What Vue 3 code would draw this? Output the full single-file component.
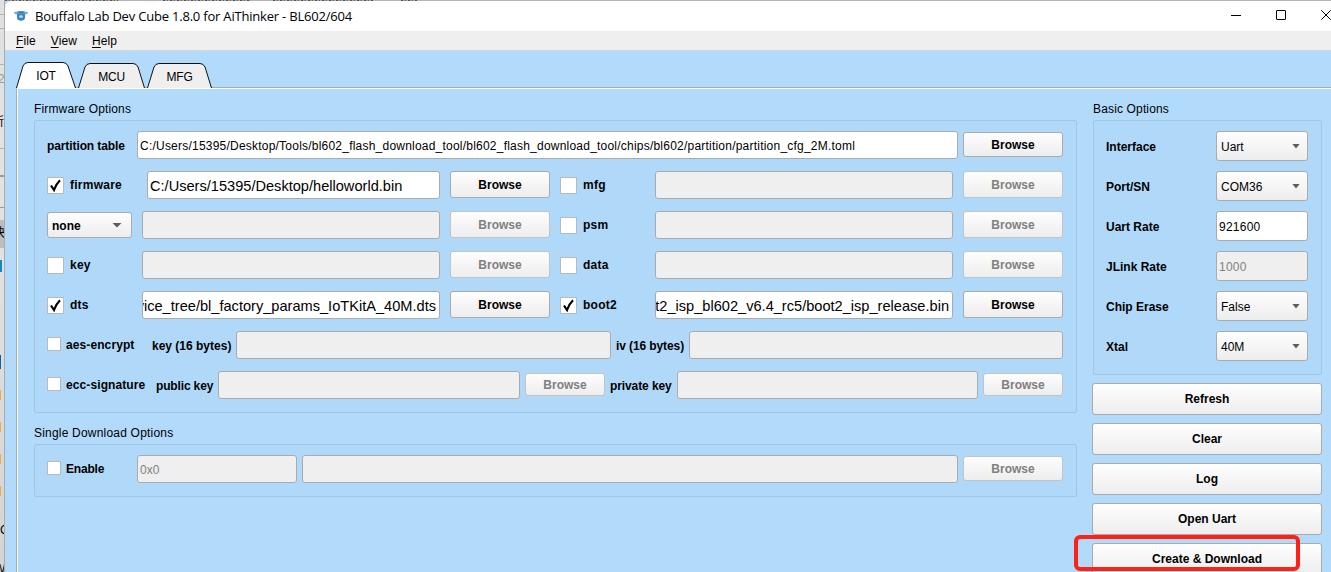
<script setup>
import { ref } from 'vue'

const menus = ['File', 'View', 'Help']
const tabs = ['IOT', 'MCU', 'MFG']
const activeTab = ref('IOT')

const partitionTable = 'C:/Users/15395/Desktop/Tools/bl602_flash_download_tool/bl602_flash_download_tool/chips/bl602/partition/partition_cfg_2M.toml'

const imageRows = [
  [
    { label: 'firmware', checked: true, value: 'C:/Users/15395/Desktop/helloworld.bin', inset: true },
    { label: 'mfg' },
  ],
  [
    { label: 'none', select: true },
    { label: 'psm' },
  ],
  [
    { label: 'key' },
    { label: 'data' },
  ],
  [
    { label: 'dts', checked: true, value: 'vice_tree/bl_factory_params_IoTKitA_40M.dts', tail: true },
    { label: 'boot2', checked: true, value: 't2_isp_bl602_v6.4_rc5/boot2_isp_release.bin', tail: true },
  ],
]

const basicOptions = [
  { label: 'Interface', value: 'Uart', type: 'select' },
  { label: 'Port/SN', value: 'COM36', type: 'select' },
  { label: 'Uart Rate', value: '921600', type: 'field' },
  { label: 'JLink Rate', value: '1000', type: 'disabled' },
  { label: 'Chip Erase', value: 'False', type: 'select' },
  { label: 'Xtal', value: '40M', type: 'select' },
]

const actions = ['Refresh', 'Clear', 'Log', 'Open Uart', 'Create & Download']
</script>

<template>
  <div class="desktop">
    <div class="behind" aria-hidden="true">
      <i class="line line--a"></i>
      <i class="line line--b"></i>
      <i class="line line--c"></i>
      <i class="line line--d"></i>
      <i class="line line--e"></i>
      <i class="line line--f"></i>
      <i class="band"></i>
      <i class="mark mark--teal"></i>
      <i class="mark mark--blue"></i>
      <i class="mark folder folder--1"></i>
      <i class="mark folder folder--2"></i>
      <i class="mark folder folder--3"></i>
      <i class="mark folder folder--4"></i>
      <span class="bit bit--02">2</span>
      <span class="bit bit--suo">所</span>
      <span class="bit bit--kuai">快</span>
      <span class="bit bit--c">C</span>
      <span class="bit bit--w">W</span>
    </div>
    <div class="behind-top" aria-hidden="true"></div>

    <div class="window">
      <header class="titlebar">
        <svg class="logo" width="16" height="12" viewBox="0 0 16 12">
          <path d="M.5 2.500 5 1.200h6l4.500 1.300-2 1.800h-11z" fill="#6aa9d8" />
          <path d="M4 3.500h8V8q-.5 2.800-4 2.800T4 8z" fill="#3b86bd" />
          <path d="M4.500 1.600h7L10 2.900H6z" fill="#2f78ae" />
          <ellipse cx="8" cy="6.600" rx="2" ry="1.300" fill="#b5d9ef" />
        </svg>
        <span class="title">Bouffalo Lab Dev Cube 1.8.0 for AiThinker - BL602/604</span>
        <div class="controls">
          <svg width="10" height="10" viewBox="0 0 10 10"><path d="M0 5.500h10" stroke="#000" /></svg>
          <svg width="10" height="10" viewBox="0 0 10 10"><rect x=".5" y=".5" width="9" height="9" rx=".5" fill="none" stroke="#000" /></svg>
          <svg width="10" height="10" viewBox="0 0 10 10"><path d="M.3.3l9.400 9.400M9.700.3.3 9.700" stroke="#000" /></svg>
        </div>
      </header>

      <nav class="menubar">
        <span v-for="menu in menus" :key="menu"><u>{{ menu[0] }}</u>{{ menu.slice(1) }}</span>
      </nav>

      <div class="tabs">
        <div
          v-for="tab in tabs"
          :key="tab"
          class="tab"
          :class="{ 'tab--active': tab === activeTab }"
          @click="activeTab = tab"
        >
          <svg v-if="tab === activeTab" width="60" height="26" viewBox="0 0 60 26">
            <path d="M.5 26 7 4Q8.500.5 12 .5h35Q50.500.5 52 4l7.500 22" fill="#fff" stroke="#111" />
          </svg>
          <svg v-else-if="tab === 'MFG'" width="65" height="25" viewBox="0 0 65 25">
            <path d="M.5 25 7 4Q8.500.5 12 .5h41Q56.500.5 58 4l6.500 21" fill="#efefef" stroke="#111" />
          </svg>
          <svg v-else width="67" height="25" viewBox="0 0 67 25">
            <path d="M.5 25 7 4Q8.500.5 12 .5h43Q58.500.5 60 4l6.500 21" fill="#efefef" stroke="#111" />
          </svg>
          <span>{{ tab }}</span>
        </div>
      </div>

      <main class="pane">
        <section class="left">
          <h2 class="heading">Firmware Options</h2>
          <div class="group group--firmware">
            <div class="row">
              <label class="label label--partition">partition table</label>
              <div class="field grow field--path"><span>{{ partitionTable }}</span></div>
              <button class="button browse browse--short">Browse</button>
            </div>

            <div v-for="(row, index) in imageRows" :key="index" class="row row--images">
              <div v-for="item in row" :key="item.label" class="image">
                <div v-if="item.select" class="select select--none">
                  <span>{{ item.label }}</span>
                  <i class="arrow arrow--large"></i>
                </div>
                <label v-else class="check">
                  <span class="box">
                    <svg v-if="item.checked" width="11" height="13" viewBox="0 0 11 13">
                      <path d="M1 6.500 4 11Q6 5 10 1.200" fill="none" stroke="#000" stroke-width="2.200" />
                    </svg>
                  </span>
                  {{ item.label }}
                </label>
                <div
                  class="field field--large grow"
                  :class="{ 'field--disabled': !item.value, 'field--inset': item.inset, 'field--tail': item.tail }"
                >
                  <span>{{ item.value }}</span>
                </div>
                <button class="button browse" :disabled="!item.value">Browse</button>
              </div>
            </div>

            <div class="row">
              <label class="check check--small check--aes"><span class="box"></span>aes-encrypt</label>
              <label class="label label--aes">key (16 bytes)</label>
              <div class="field field--disabled field--aes"></div>
              <label class="label label--iv">iv (16 bytes)</label>
              <div class="field field--disabled grow"></div>
            </div>

            <div class="row">
              <label class="check check--small check--ecc"><span class="box"></span>ecc-signature</label>
              <label class="label label--public">public key</label>
              <div class="field field--disabled field--public"></div>
              <button class="button browse browse--narrow" disabled>Browse</button>
              <label class="label label--private">private key</label>
              <div class="field field--disabled grow"></div>
              <button class="button browse browse--narrow" disabled>Browse</button>
            </div>
          </div>

          <h2 class="heading heading--single">Single Download Options</h2>
          <div class="group group--single">
            <div class="row">
              <label class="check check--small check--enable"><span class="box"></span>Enable</label>
              <div class="field field--disabled field--address"><span>0x0</span></div>
              <div class="field field--disabled grow"></div>
              <button class="button browse browse--short" disabled>Browse</button>
            </div>
          </div>
        </section>

        <aside class="right">
          <h2 class="heading">Basic Options</h2>
          <div class="group group--basic">
            <div v-for="option in basicOptions" :key="option.label" class="option">
              <label class="label">{{ option.label }}</label>
              <div v-if="option.type === 'select'" class="select">
                <span>{{ option.value }}</span>
                <i class="arrow"></i>
              </div>
              <div v-else class="field" :class="{ 'field--disabled': option.type === 'disabled' }">
                <span>{{ option.value }}</span>
              </div>
            </div>
          </div>
          <div class="actions">
            <button v-for="action in actions" :key="action" class="button">{{ action }}</button>
            <div class="highlight"></div>
          </div>
        </aside>
      </main>
    </div>
  </div>
</template>

<style>
body {
  overflow: hidden;
}
</style>

<style scoped>
* {
  box-sizing: border-box;
}

.desktop {
  position: relative;
  width: 1331px;
  height: 572px;
  padding: 1px 0 0 5px;
  overflow: hidden;
  background: linear-gradient(#b5b5b5 0 1px, #d8d8d8 1px);
  color: #000;
  font-family: "Liberation Sans", Arial, "Noto Sans CJK SC", sans-serif;
  font-size: 12px;
}

/* sliver of the windows lying behind the tool */
.behind {
  position: absolute;
  inset: 0 auto 0 0;
  width: 5px;
  overflow: hidden;
  background: linear-gradient(#e0e0e0, #e3e3e3 200px, #d4d4d4);
  border-right: 1px solid #a9aaac;
}

.behind > * {
  position: absolute;
  left: 0;
}

.behind-top {
  position: absolute;
  top: 0;
  left: 5px;
  width: 412px;
  height: 1px;
  background:
    repeating-linear-gradient(90deg, #555 0 2px, #999 2px 4px, #666 4px 5px, #aaa 5px 7px) 0 0 / 113px 1px no-repeat,
    repeating-linear-gradient(90deg, #555 0 2px, #999 2px 4px, #666 4px 5px, #aaa 5px 7px) 158px 0 / 87px 1px no-repeat,
    repeating-linear-gradient(90deg, #555 0 2px, #999 2px 4px, #666 4px 5px, #aaa 5px 7px) 268px 0 / 100px 1px no-repeat,
    repeating-linear-gradient(90deg, #555 0 2px, #999 2px 4px, #666 4px 5px, #aaa 5px 7px) 396px 0 / 16px 1px no-repeat;
}

.line {
  width: 5px;
  height: 1px;
  background: #b4b4b4;
}

.line--a { top: 14px; }
.line--b { top: 28px; }
.line--c { top: 64px; }
.line--d { top: 148px; }
.line--e { top: 175px; height: 2px; background: #999; }
.line--f { top: 207px; background: #999; }

.band {
  top: 220px;
  width: 5px;
  height: 28px;
  background: #bdbdbd;
}

.mark {
  top: 260px;
  width: 2px;
  height: 12px;
  background: #1688b9;
}

.mark--blue { top: 355px; width: 1px; height: 14px; background: #0862ac; }
.folder { width: 1px; height: 10px; background: #dfb446; }
.folder--1 { top: 390px; }
.folder--2 { top: 422px; }
.folder--3 { top: 454px; }
.folder--4 { top: 486px; }

.bit { line-height: 14px; }
.behind .bit--02 { top: 72px; left: -2px; color: #999; }
.behind .bit--suo { top: 115px; left: -8px; }
.behind .bit--kuai { top: 226px; left: -7px; }
.behind .bit--c { top: 523px; left: 0; }
.behind .bit--w { top: 562px; left: -6px; }

.window {
  width: 1326px;
  height: 571px;
  border-radius: 7px 0 0;
  overflow: hidden;
  background: #b2dbfb;
}

.titlebar {
  display: flex;
  align-items: center;
  height: 30px;
  padding-left: 8px;
  background: #fff;
}

.logo {
  flex: none;
}

.title {
  margin-left: 6px;
  font-family: "Open Sans", sans-serif;
  font-size: 13px;
  line-height: 20px;
  letter-spacing: -0.2px;
  white-space: nowrap;
}

.controls {
  display: flex;
  gap: 35px;
  width: 100px;
  margin: -2px 0 0 auto;
}

.controls svg {
  flex: none;
}

.menubar {
  display: flex;
  gap: 15px;
  height: 20px;
  padding-left: 11px;
  border-bottom: 1px solid #d3d5d8;
  background: #efefef;
  line-height: 20px;
  letter-spacing: 0.1px;
}

.menubar u {
  text-underline-offset: 2px;
}

.tabs {
  display: flex;
  align-items: flex-end;
  gap: 2px;
  height: 37px;
  padding-left: 11px;
  background: linear-gradient(#a6abb0, #a6abb0) 11px 36px / 100% 1px no-repeat;
}

.tab {
  display: grid;
  justify-items: center;
  align-items: end;
}

.tab > * {
  grid-area: 1 / 1;
}

.tab svg {
  display: block;
}

.tab span {
  padding-bottom: 3px;
  line-height: 15px;
  letter-spacing: -0.2px;
}

.tab--active span {
  padding-bottom: 4px;
}

.pane {
  display: flex;
  gap: 15px;
  height: 484px;
  margin-left: 11px;
  padding: 14px 9px 0 17px;
  border-top: 1px solid #fff;
  border-left: 1px solid #a6abb0;
  box-shadow: inset 1px 0 #fff;
}

.left {
  width: 1043px;
  flex: none;
}

.right {
  width: 230px;
  flex: none;
}

.heading {
  height: 17px;
  margin: 0;
  font-size: 12px;
  font-weight: 400;
  line-height: 12px;
  letter-spacing: 0.15px;
}

.right .heading {
  padding-left: 1px;
}

.heading--single {
  margin-top: 14px;
  letter-spacing: 0.2px;
}

.group {
  border: 1px solid #a3c5e0;
  border-radius: 2px;
  background: #b0d9f9;
  padding: 10px 13px 0 12px;
}

.group--firmware {
  height: 293px;
}

.group--single {
  height: 53px;
}

.row {
  display: flex;
  align-items: center;
  height: 28px;
  margin-bottom: 12px;
}

.row--images {
  gap: 10px;
}

.image {
  display: flex;
  align-items: center;
  width: 503px;
  flex: none;
}

.grow {
  flex: 1;
  min-width: 0;
}

.label,
.check {
  flex: none;
  font-weight: 700;
  line-height: 14px;
  white-space: nowrap;
}

.label {
  padding-top: 1px;
}

.label--partition { width: 90px; letter-spacing: -0.1px; }
.label--aes { width: 84px; }
.label--iv { width: 78px; padding-left: 5px; letter-spacing: -0.1px; }
.label--public { width: 62px; letter-spacing: -0.15px; }
.label--private { width: 72px; padding-left: 5px; letter-spacing: -0.1px; }

.check {
  display: flex;
  align-items: center;
  gap: 6px;
  width: 95px;
  letter-spacing: 0.25px;
}

.check--small {
  gap: 5px;
  letter-spacing: 0.1px;
}

.check--aes { width: 105px; }
.check--ecc { width: 109px; }
.check--enable { width: 90px; letter-spacing: -0.2px; }

.box {
  display: grid;
  place-items: center;
  width: 17px;
  height: 17px;
  border: 1px solid #b9babb;
  background: #fff;
}

.check--small .box {
  width: 14px;
  height: 14px;
  margin-top: -2px;
}

.field {
  display: flex;
  align-items: center;
  height: 28px;
  padding: 1px 2px 0;
  border: 1px solid #ababab;
  border-radius: 3px;
  background: #fff;
  overflow: hidden;
  white-space: nowrap;
}

.field--path {
  margin-right: 5px;
  letter-spacing: 0.22px;
}

.field--disabled {
  background: #efefef;
  color: #808080;
}

.field--large {
  margin-right: 10px;
  font-size: 14.6px;
}

.field--inset {
  margin-left: 5px;
}

.field--tail {
  justify-content: flex-end;
  padding-right: 3px;
}

.field--aes { width: 375px; }
.field--public { width: 302px; margin-right: 5px; }
.field--address { width: 160px; margin-right: 5px; }
.group--single .field.grow { margin-right: 5px; }

.button {
  display: block;
  padding: 0;
  border: 1px solid #ababab;
  border-radius: 3px;
  background: linear-gradient(#fefefe, #ededed);
  color: #000;
  font: 700 12px/14px "Liberation Sans", Arial, sans-serif;
}

.button:disabled {
  border-color: #c1c4c6;
  color: #808080;
}

.browse {
  flex: none;
  width: 100px;
  height: 27px;
  margin-top: -1px;
}

.browse--short {
  height: 25px;
}

.browse--narrow {
  width: 80px;
  height: 23px;
}

.field.grow + .browse--narrow {
  margin-left: 5px;
}

.select {
  display: flex;
  align-items: center;
  justify-content: space-between;
  height: 30px;
  padding: 1px 7px 0 4px;
  border: 1px solid #ababab;
  border-radius: 3px;
  background: linear-gradient(#fefefe, #ededed);
}

.select--none {
  width: 85px;
  height: 26px;
  margin-right: 10px;
  padding-right: 9px;
  font-weight: 700;
}

.arrow {
  flex: none;
  width: 8px;
  height: 5px;
  margin-top: -1px;
  background: #5c5c5c;
  clip-path: polygon(0 0, 100% 0, 50% 100%);
}

.arrow--large {
  width: 10px;
}

.group--basic {
  width: 229px;
  height: 255px;
  margin-left: 1px;
}

.option {
  display: flex;
  align-items: center;
  justify-content: space-between;
  height: 30px;
  margin-bottom: 10px;
}

.option .select,
.option .field {
  width: 92px;
  height: 30px;
}

.option .field {
  letter-spacing: 0.25px;
}

.actions {
  position: relative;
  display: flex;
  flex-direction: column;
  gap: 8px;
  margin-top: 8px;
}

.actions .button {
  flex: none;
  width: 230px;
  height: 32px;
}

/* marker drawn around the last action */
.highlight {
  position: absolute;
  top: 152px;
  left: -18px;
  width: 226px;
  height: 36px;
  border: 4px solid #ff2116;
  border-radius: 6px;
}
</style>
